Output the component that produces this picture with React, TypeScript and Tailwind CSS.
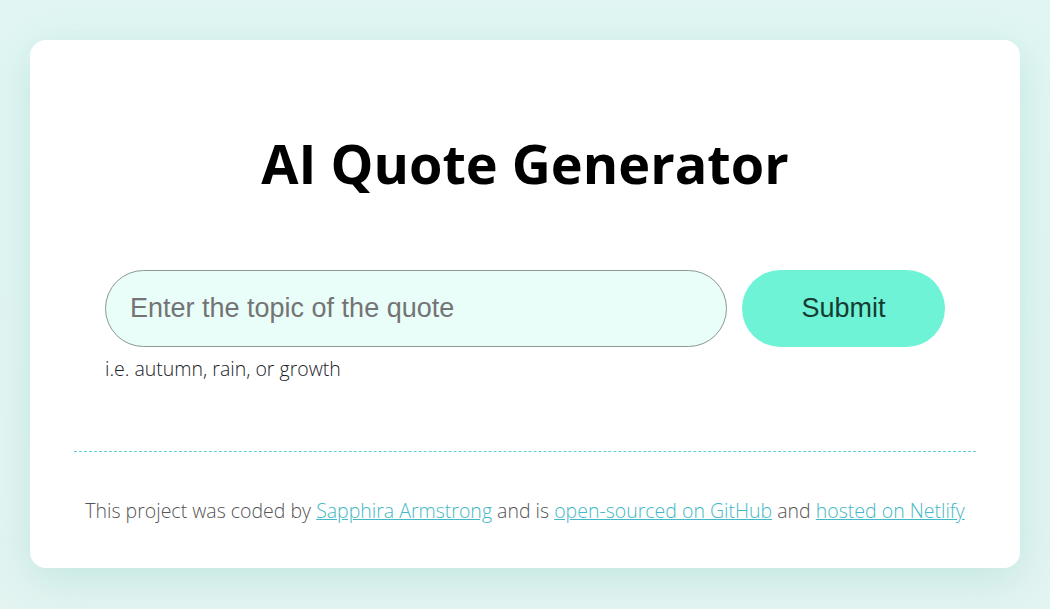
export default function App() {
  return (
    <div className="min-h-[609px] w-full bg-gradient-to-b from-[#e1f6f3] to-[#e3f4f1] px-[30px] pt-[40px] pb-[41px]">
      <div
        className="rounded-[16px] bg-white px-[44px] pt-[88px] pb-[43px] shadow-[0_10px_40px_rgba(120,200,190,0.3)]"
        style={{ fontFamily: '"Open Sans", sans-serif' }}
      >
        <h1 className="text-center text-[54px] leading-[70px] font-bold text-black">
          AI Quote Generator
        </h1>

        <form className="mx-auto mt-[72px] w-[840px]" onSubmit={(e) => e.preventDefault()}>
          <div className="flex gap-[15px]">
            <input
              type="text"
              placeholder="Enter the topic of the quote"
              className="h-[77px] flex-1 rounded-full border border-[#8a9796] bg-[#e9fdf9] px-[24px] text-[27px] text-[#333] placeholder:text-[#747474] outline-none"
              style={{ fontFamily: '"Liberation Sans", Arial, sans-serif' }}
            />
            <button
              type="submit"
              className="h-[77px] w-[203px] rounded-full bg-[#6ef3d6] text-[27px] text-[#163b33]"
              style={{ fontFamily: '"Liberation Sans", Arial, sans-serif' }}
            >
              Submit
            </button>
          </div>
          <p className="mt-[8px] text-[19.5px] leading-[28px] font-light text-[#1a2228]">
            i.e. autumn, rain, or growth
          </p>
        </form>

        <hr className="mt-[68px] border-0 border-t border-dashed border-[#5fd0da]" />

        <footer className="mt-[45px] text-center text-[19.5px] leading-[28px] font-light text-[#555]">
          This project was coded by{" "}
          <a href="#" className="text-[#43b8c6] underline">
            Sapphira Armstrong
          </a>{" "}
          and is{" "}
          <a href="#" className="text-[#43b8c6] underline">
            open-sourced on GitHub
          </a>{" "}
          and{" "}
          <a href="#" className="text-[#43b8c6] underline">
            hosted on Netlify
          </a>
        </footer>
      </div>
    </div>
  );
}
